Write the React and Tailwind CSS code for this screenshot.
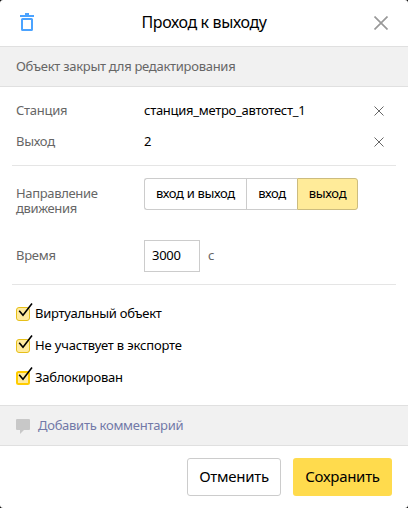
import React from 'react';

function Cross({ size, color, width }) {
  return (
    <svg width={size} height={size} viewBox={`0 0 ${size} ${size}`} fill="none" stroke={color} strokeWidth={width}>
      <path d={`M0.5 0.5L${size - 0.5} ${size - 0.5}M${size - 0.5} 0.5L0.5 ${size - 0.5}`} />
    </svg>
  );
}

function Field({ label, value }) {
  return (
    <div className="flex h-[31px] items-center pr-6 pl-4">
      <span className="w-32 text-[#666]">{label}</span>
      <span className="flex-1">{value}</span>
      <button type="button" aria-label="Очистить">
        <Cross size={10} color="#666" width={1} />
      </button>
    </div>
  );
}

function Check({ children, focused }) {
  return (
    <label className="flex h-8 items-center">
      <svg className="-mt-0.5 shrink-0" width="19" height="20" viewBox="0 0 19 20" fill="none">
        <rect
          x={focused ? 1 : 0.5}
          y={focused ? 6 : 5.5}
          width={focused ? 12 : 13}
          height={focused ? 12 : 13}
          rx={focused ? 1.5 : 2.5}
          fill="#ffeba0"
          stroke={focused ? '#ffcc00' : '#e6bf1a'}
          strokeWidth={focused ? 2 : 1}
        />
        <path d="M3.2 8.8L7 13.3L16 1.5" stroke="#000" strokeWidth="1.6" />
      </svg>
      {children}
    </label>
  );
}

export default function App() {
  return (
    <div className="h-[508px] w-[408px] bg-black font-['Noto_Sans',sans-serif] text-[13px] leading-[15px] tracking-[-0.28px] text-black">
      <div className="flex h-full flex-col overflow-hidden rounded-[3px] bg-white">
        <header className="flex h-[47px] items-center justify-between border-b border-[#e0e0e0] pr-5 pl-5">
          <svg className="-mt-0.5" width="14" height="18" viewBox="0 0 14 18" fill="none">
            <path d="M0 3H14M5 1H9" stroke="#4ba3ff" strokeWidth="2" />
            <rect x="2" y="6" width="10" height="11" rx="0.5" stroke="#4ba3ff" strokeWidth="2" />
          </svg>
          <h1 className="pb-0.5 text-base leading-5 tracking-[-0.36px]">Проход к выходу</h1>
          <button type="button" aria-label="Закрыть">
            <Cross size={14} color="#999" width={1.7} />
          </button>
        </header>

        <div className="flex h-10 items-center border-b border-[#e0e0e0] bg-[#f1f1f1] pl-4 text-[#666]">
          Объект закрыт для редактирования
        </div>

        <div className="h-[78px] pt-2">
          <Field label="Станция" value="станция_метро_автотест_1" />
          <Field label="Выход" value="2" />
        </div>

        <section className="mx-3 h-[119px] border-t border-[#e5e5e5] px-1 pt-3">
          <div className="flex h-[62px]">
            <span className="w-32 pt-2 tracking-[-0.34px] text-[#666]">
              Направление
              <br />
              движения
            </span>
            <div className="flex h-8 tracking-[-0.33px]">
              <button type="button" className="w-[102px] rounded-l-[3px] border border-r-0 border-[#ccc] pb-0.5">вход и выход</button>
              <button type="button" className="w-[51px] border border-r-0 border-[#ccc] pb-0.5">вход</button>
              <button type="button" className="w-[61px] rounded-r-[3px] border border-[#ccbc7f] bg-[#ffeb99] pb-0.5">выход</button>
            </div>
          </div>
          <div className="flex h-8 items-center text-[#666]">
            <span className="w-32 pb-0.5">Время</span>
            <input className="h-8 w-14 border border-[#ccc] px-[7px] pb-0.5 text-black" defaultValue="3000" />
            <span className="pb-0.5 pl-2">с</span>
          </div>
        </section>

        <section className="mx-3 h-[121px] border-t border-[#e5e5e5] px-1 pt-3">
          <Check>Виртуальный объект</Check>
          <Check>
            <span className="tracking-[-0.17px]">Не участвует в экспорте</span>
          </Check>
          <Check focused>Заблокирован</Check>
        </section>

        <div className="flex h-[41px] items-center gap-2 border-y border-[#e0e0e0] bg-[#f1f1f1] pl-4 text-[#7279a8]">
          <svg className="mt-px" width="14" height="15" viewBox="0 0 14 15" fill="#c8c8c8">
            <path d="M1 0H13Q14 0 14 1V10Q14 11 13 11H8L4 15V11H1Q0 11 0 10V1Q0 0 1 0Z" />
          </svg>
          Добавить комментарий
        </div>

        <footer className="flex justify-end gap-3 pt-3 pr-4 text-[15px]">
          <button type="button" className="h-[38px] w-[94px] rounded-[3px] border border-[#ccc] pb-0.5">Отменить</button>
          <button type="button" className="h-[38px] w-[99px] rounded-[3px] bg-[#ffdb4d] pb-0.5">Сохранить</button>
        </footer>
      </div>
    </div>
  );
}
